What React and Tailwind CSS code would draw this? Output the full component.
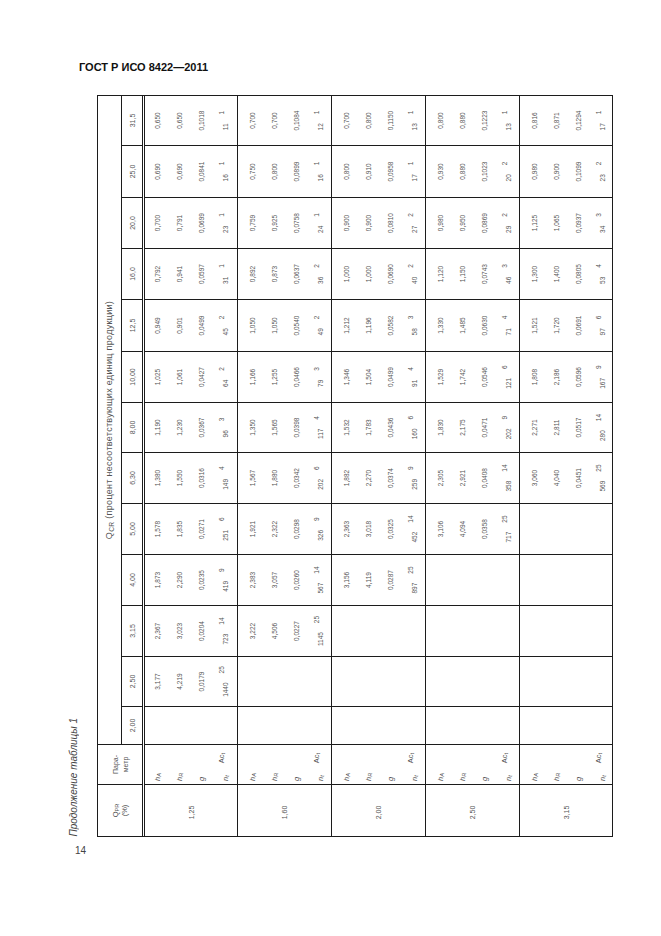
import React from "react";

const ink = "border-[#1c1c1c]";

const cols = [
  { w: "w-[38px]", h: "2,00" },
  { w: "w-[50px]", h: "2,50" },
  { w: "w-[51px]", h: "3,15" },
  { w: "w-[51px]", h: "4,00" },
  { w: "w-[51px]", h: "5,00" },
  { w: "w-[51px]", h: "6,30" },
  { w: "w-[50px]", h: "8,00" },
  { w: "w-[51px]", h: "10,00" },
  { w: "w-[52px]", h: "12,5" },
  { w: "w-[51px]", h: "16,0" },
  { w: "w-[51px]", h: "20,0" },
  { w: "w-[52px]", h: "25,0" },
  { w: "w-[50px]", h: "31,5" },
];

// hA hR g nt Act, one string per column, null = empty cell
const groups = [
  {
    q: "1,25",
    box: "h-[92px]",
    pad: "pt-[2px]",
    cells: [
      null,
      "3,177 4,219 0,0179 1440 25",
      "2,367 3,023 0,0204 723 14",
      "1,873 2,290 0,0235 419 9",
      "1,578 1,835 0,0271 251 6",
      "1,380 1,550 0,0316 149 4",
      "1,190 1,230 0,0367 96 3",
      "1,025 1,061 0,0427 64 2",
      "0,949 0,901 0,0499 45 2",
      "0,792 0,941 0,0597 31 1",
      "0,700 0,791 0,0699 23 1",
      "0,690 0,690 0,0841 16 1",
      "0,650 0,650 0,1018 11 1",
    ],
  },
  {
    q: "1,60",
    box: "h-[94px] border-t",
    pad: "pt-[4px]",
    cells: [
      null,
      null,
      "3,222 4,506 0,0227 1145 25",
      "2,383 3,057 0,0260 567 14",
      "1,921 2,322 0,0298 326 9",
      "1,567 1,880 0,0342 202 6",
      "1,350 1,565 0,0398 117 4",
      "1,166 1,255 0,0466 79 3",
      "1,050 1,050 0,0540 49 2",
      "0,892 0,873 0,0637 36 2",
      "0,759 0,925 0,0758 24 1",
      "0,750 0,800 0,0899 16 1",
      "0,700 0,700 0,1084 12 1",
    ],
  },
  {
    q: "2,00",
    box: "h-[94px] border-t",
    pad: "pt-[4px]",
    cells: [
      null,
      null,
      null,
      "3,156 4,119 0,0287 897 25",
      "2,363 3,018 0,0325 452 14",
      "1,882 2,270 0,0374 259 9",
      "1,532 1,783 0,0436 160 6",
      "1,346 1,504 0,0499 91 4",
      "1,212 1,196 0,0582 58 3",
      "1,000 1,000 0,0690 40 2",
      "0,900 0,900 0,0810 27 2",
      "0,800 0,910 0,0958 17 1",
      "0,700 0,800 0,1150 13 1",
    ],
  },
  {
    q: "2,50",
    box: "h-[94px] border-t",
    pad: "pt-[4px]",
    cells: [
      null,
      null,
      null,
      null,
      "3,106 4,094 0,0358 717 25",
      "2,305 2,921 0,0408 358 14",
      "1,830 2,175 0,0471 202 9",
      "1,529 1,742 0,0546 121 6",
      "1,330 1,485 0,0630 71 4",
      "1,120 1,150 0,0743 46 3",
      "0,980 0,950 0,0869 29 2",
      "0,930 0,880 0,1023 20 2",
      "0,800 0,880 0,1223 13 1",
    ],
  },
  {
    q: "3,15",
    box: "h-[93px] border-t",
    pad: "pt-[4px]",
    cells: [
      null,
      null,
      null,
      null,
      null,
      "3,060 4,040 0,0451 569 25",
      "2,271 2,811 0,0517 280 14",
      "1,808 2,186 0,0596 167 9",
      "1,521 1,720 0,0691 97 6",
      "1,300 1,400 0,0805 53 4",
      "1,125 1,065 0,0937 34 3",
      "0,980 0,900 0,1099 23 2",
      "0,816 0,871 0,1294 17 1",
    ],
  },
];

function Values({ v }) {
  if (!v) return null;
  const [a, r, g, n, ac] = v.split(" ");
  return (
    <>
      <div className="h-[22px] flex items-center justify-center">{a}</div>
      <div className="h-[22px] flex items-center justify-center">{r}</div>
      <div className="h-[22px] flex items-center justify-center">{g}</div>
      <div className="h-[22px] flex items-end justify-center gap-[9px] pb-[6px]">
        <span>{n}</span>
        <span className="mb-[4px]">{ac}</span>
      </div>
    </>
  );
}

function Params({ pad }) {
  return (
    <div className={`w-[40px] border-l ${ink} ${pad} flex flex-col pl-[3px] italic text-[7.5px] leading-none`}>
      <div className="h-[22px] flex items-center">h<sub>A</sub></div>
      <div className="h-[22px] flex items-center">h<sub>R</sub></div>
      <div className="h-[22px] flex items-center">g</div>
      <div className="h-[22px] flex items-end pb-[6px]">
        <span>n<sub>t</sub></span>
        <span className="ml-auto mr-[8px] mb-[4px] not-italic">Ac<sub>t</sub></span>
      </div>
    </div>
  );
}

function Table() {
  return (
    <div className={`w-[742px] h-[516px] border ${ink} origin-top-left [transform:translateY(742px)_rotate(-90deg)] text-[#555] leading-none flex flex-col`}>
      <div className={`flex h-[47px] border-b-[3px] border-double ${ink}`}>
        <div className="w-[51px] flex flex-col items-center justify-center gap-[2px] text-[7.5px]">
          <span>Q<sub>PR</sub></span>
          <span>(%)</span>
        </div>
        <div className={`w-[40px] border-l ${ink} flex flex-col items-center justify-center gap-[3px] text-[7px]`}>
          <span>Пара-</span>
          <span>метр</span>
        </div>
        <div className="flex-1 flex flex-col">
          <div className={`h-[23px] border-l ${ink} flex items-center justify-center text-[9px] tracking-[0.3px]`}>
            <span>Q<sub>CR</sub> (процент несоответствующих единиц продукции)</span>
          </div>
          <div className={`flex-1 flex border-t ${ink}`}>
            {cols.map((c) => (
              <div key={c.h} className={`${c.w} border-l ${ink} flex items-center justify-center text-[7px]`}>
                {c.h}
              </div>
            ))}
          </div>
        </div>
      </div>

      {groups.map((g) => (
        <div key={g.q} className={`flex ${g.box} ${ink}`}>
          <div className="w-[51px] flex items-center justify-center text-[7px] pr-[4px]">{g.q}</div>
          <Params pad={g.pad} />
          {cols.map((c, i) => (
            <div key={c.h} className={`${c.w} border-l ${ink} ${g.pad} flex flex-col text-[6.5px]`}>
              <Values v={g.cells[i]} />
            </div>
          ))}
        </div>
      ))}
    </div>
  );
}

export default function App() {
  return (
    <div className="w-[661px] h-[936px] bg-white text-[#333] font-['Liberation_Sans',Arial,sans-serif]">
      <div className="pt-[61px] pl-[79px] text-[11px] leading-[13px] font-bold text-[#111]">
        ГОСТ Р ИСО 8422—2011
      </div>

      <div className="mt-[21px] flex">
        <div className="w-[97px] shrink-0 flex justify-end items-end pr-[17px]">
          <div className="[writing-mode:vertical-rl] rotate-180 italic text-[10px] leading-[12px] text-[#444]">
            Продолжение таблицы 1
          </div>
        </div>
        <div className="w-[516px] h-[742px] shrink-0">
          <Table />
        </div>
      </div>

      <div className="pl-[75px] mt-[8px] text-[10px] leading-[12px] text-[#444]">14</div>
    </div>
  );
}
